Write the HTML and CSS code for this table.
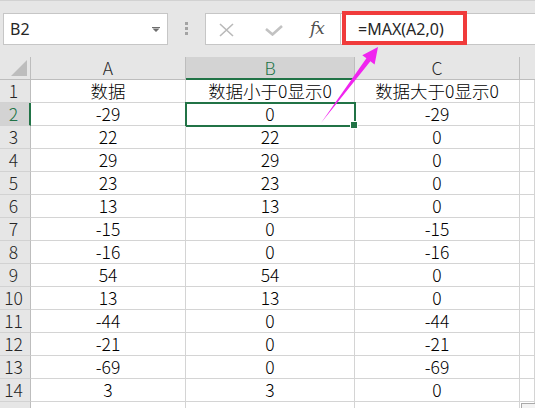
FILE: index.html
```html
<!DOCTYPE html>
<html lang="zh">
<head>
<meta charset="utf-8">
<link rel="stylesheet" href="styles.css">
</head>
<body>
<div class="app">
  <div class="fbar">
    <div class="namebox">
      <span class="ref">B2</span>
      <svg class="dd" width="8" height="5" viewBox="0 0 8 5"><path d="M0 0H8V1H0Z M0.5 1.5H7.5L4 5Z" fill="#6e6e6e"/></svg>
    </div>
    <div class="grip"><i></i><i></i><i></i></div>
    <div class="btns">
      <svg class="ic-x" width="17" height="14" viewBox="0 0 17 14"><path d="M2 1L15 13M15 1L2 13" stroke="#b9b9b9" stroke-width="1.6" fill="none"/></svg>
      <svg class="ic-ok" width="18" height="11" viewBox="0 0 18 11"><path d="M1 4L7.5 9.5L17 1" stroke="#c2c2c2" stroke-width="2.6" fill="none"/></svg>
      <span class="fx">fx</span>
    </div>
    <div class="finput">=MAX(A2,0)</div>
    <div class="redbox"></div>
  </div>

  <div class="sheet">
    <div class="h corner"><svg width="16" height="16" viewBox="0 0 16 16"><path d="M16 0V16H0Z" fill="#bdbdbd"/></svg></div>
    <div class="h col">A</div>
    <div class="h col sel">B</div>
    <div class="h col">C</div>
    <div class="h col last"></div>

    <div class="rh">1</div><div class="c">数据</div><div class="c">数据小于0显示0</div><div class="c">数据大于0显示0</div><div class="c"></div>
    <div class="rh sel">2</div><div class="c">-29</div><div class="c active">0<span class="handle"></span></div><div class="c">-29</div><div class="c"></div>
    <div class="rh">3</div><div class="c">22</div><div class="c">22</div><div class="c">0</div><div class="c"></div>
    <div class="rh">4</div><div class="c">29</div><div class="c">29</div><div class="c">0</div><div class="c"></div>
    <div class="rh">5</div><div class="c">23</div><div class="c">23</div><div class="c">0</div><div class="c"></div>
    <div class="rh">6</div><div class="c">13</div><div class="c">13</div><div class="c">0</div><div class="c"></div>
    <div class="rh">7</div><div class="c">-15</div><div class="c">0</div><div class="c">-15</div><div class="c"></div>
    <div class="rh">8</div><div class="c">-16</div><div class="c">0</div><div class="c">-16</div><div class="c"></div>
    <div class="rh">9</div><div class="c">54</div><div class="c">54</div><div class="c">0</div><div class="c"></div>
    <div class="rh">10</div><div class="c">13</div><div class="c">13</div><div class="c">0</div><div class="c"></div>
    <div class="rh">11</div><div class="c">-44</div><div class="c">0</div><div class="c">-44</div><div class="c"></div>
    <div class="rh">12</div><div class="c">-21</div><div class="c">0</div><div class="c">-21</div><div class="c"></div>
    <div class="rh">13</div><div class="c">-69</div><div class="c">0</div><div class="c">-69</div><div class="c"></div>
    <div class="rh">14</div><div class="c">3</div><div class="c">3</div><div class="c">0</div><div class="c"></div>
    <div class="rh"></div><div class="c"></div><div class="c"></div><div class="c"></div><div class="c"><span class="qa"></span></div>
  </div>

  <svg class="arrow" width="535" height="408" viewBox="0 0 535 408">
    <polygon points="321,123 366.4,58.3 362.3,55.2 378,47 374.6,64.4 370.4,61.3" fill="#f025ef"/>
  </svg>
</div>
</body>
</html>
```

FILE: styles.css
```css
* { box-sizing: border-box; }
html, body { margin: 0; padding: 0; background: #ffffff; }
body { width: 535px; height: 408px; overflow: hidden; }

.app {
  position: relative;
  width: 535px;
  height: 408px;
  overflow: hidden;
}

/* formula bar */
.fbar {
  position: relative;
  height: 57px;
  background: #e6e6e6;
  border-top: 1px solid #d2d2d2;
  display: flex;
  align-items: flex-start;
  padding-top: 12px;
  padding-left: 3px;
}
.namebox {
  width: 165px;
  height: 32px;
  background: #ffffff;
  border: 1px solid #c6c6c6;
  display: flex;
  align-items: center;
  justify-content: space-between;
  padding: 0 7px 0 6px;
  font-family: "Noto Sans", sans-serif;
  font-size: 16px;
  color: #262626;
}
.namebox .dd { margin-top: 1px; }
.grip {
  width: 3px;
  margin-left: 17px;
  margin-top: 9px;
  display: flex;
  flex-direction: column;
  gap: 2px;
}
.grip i {
  display: block;
  width: 3px;
  height: 3px;
  background: #a3a3a3;
}
.btns {
  margin-left: 17px;
  width: 136px;
  height: 32px;
  background: #ffffff;
  border: 1px solid #c6c6c6;
  display: flex;
  align-items: center;
  padding-left: 12px;
}
.ic-x { margin-top: 1px; }
.ic-ok { margin-left: 30px; margin-top: 3px; }
.fx {
  margin-left: 27px;
  font-family: "DejaVu Serif", serif;
  font-style: italic;
  font-size: 17px;
  color: #505050;
  line-height: 1;
  margin-top: -2px;
  letter-spacing: -1px;
}
.finput {
  flex: 1;
  height: 32px;
  background: #ffffff;
  border: 1px solid #c6c6c6;
  border-left: none;
  border-right: none;
  padding-left: 17px;
  font-family: "Noto Sans", sans-serif;
  font-size: 16px;
  line-height: 30px;
  color: #262626;
}
.redbox {
  position: absolute;
  left: 342px;
  top: 10px;
  width: 125px;
  height: 34px;
  border: 4px solid #f03b3b;
}

/* sheet */
.sheet {
  display: grid;
  grid-template-columns: 31px 155px 169px 165px 1fr;
  grid-auto-rows: 23px;
  font-family: "Noto Sans CJK SC", sans-serif;
  font-size: 17.5px;
  font-weight: 300;
  color: #000000;
}
.h {
  background: #e6e6e6;
  border-right: 1px solid #bdbdbd;
  border-bottom: 1px solid #bdbdbd;
  display: flex;
  align-items: center;
  justify-content: center;
  color: #262626;
  line-height: 1;
}
.h.corner {
  justify-content: flex-end;
  align-items: flex-end;
  padding: 0 3px 3px 0;
}
.h.col.last { border-right: none; }
.h.sel {
  background: #d3d3d3;
  color: #217346;
  border-bottom: 2px solid #217346;
  border-right-color: #bdbdbd;
}
.rh {
  background: #e6e6e6;
  border-right: 1px solid #bdbdbd;
  border-bottom: 1px solid #d2d2d2;
  display: flex;
  align-items: center;
  justify-content: center;
  padding-right: 3px;
  color: #262626;
  line-height: 1;
}
.rh.sel {
  background: #d3d3d3;
  color: #217346;
  border-right: 2px solid #217346;
  padding-right: 2px;
}
.c {
  border-right: 1px solid #d4d4d4;
  border-bottom: 1px solid #d4d4d4;
  display: flex;
  align-items: center;
  justify-content: center;
  line-height: 1;
  white-space: nowrap;
  position: relative;
}
.c.active::after {
  content: "";
  position: absolute;
  left: -1px;
  top: -1px;
  right: -2px;
  bottom: -2px;
  border: 2px solid #217346;
}
.handle {
  position: absolute;
  right: -4px;
  bottom: -4px;
  width: 6px;
  height: 6px;
  background: #217346;
  border: 1px solid #ffffff;
  z-index: 2;
  box-sizing: content-box;
}
.qa {
  position: absolute;
  left: 1px;
  top: 1px;
  width: 20px;
  height: 14px;
  border: 1px solid #a9a9a9;
  background: #f3f3f3;
}

.arrow {
  position: absolute;
  left: 0;
  top: 0;
  pointer-events: none;
}
```
